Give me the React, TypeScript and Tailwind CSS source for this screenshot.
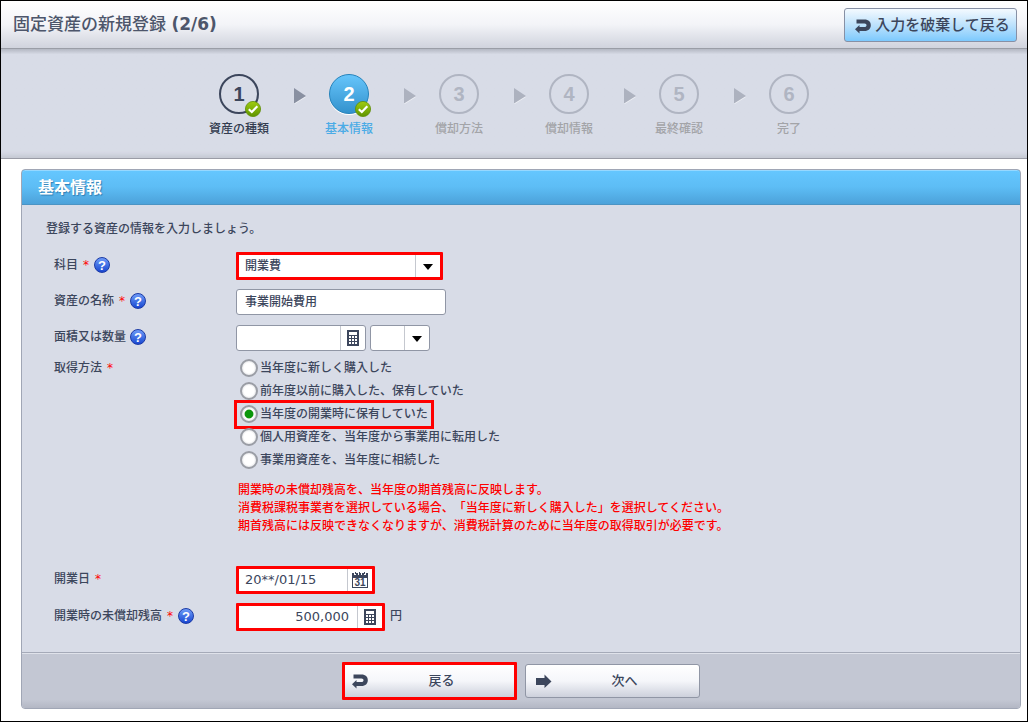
import React, { useState } from "react";

type StepState = "done" | "current" | "pending";

const steps: Array<{ label: string; state: StepState }> = [
  { label: "資産の種類", state: "done" },
  { label: "基本情報", state: "current" },
  { label: "償却方法", state: "pending" },
  { label: "償却情報", state: "pending" },
  { label: "最終確認", state: "pending" },
  { label: "完了", state: "pending" },
];

const methods = [
  "当年度に新しく購入した",
  "前年度以前に購入した、保有していた",
  "当年度の開業時に保有していた",
  "個人用資産を、当年度から事業用に転用した",
  "事業用資産を、当年度に相続した",
];

const circleStyles: Record<StepState, string> = {
  done: "border-2 border-[#3c465c] text-[#3c465c]",
  current: "border border-[#2482bb] bg-linear-to-b from-[#66c5fb] to-[#3292cd] text-white shadow-[0_1px_0_#ffffff]",
  pending: "border-2 border-[#b0b5c2] text-[#b0b5c2]",
};

const labelStyles: Record<StepState, string> = {
  done: "text-[#333c50]",
  current: "text-[#4aabe6]",
  pending: "text-[#a3a4a8]",
};

const BackIcon = () => (
  <svg width="16" height="15" viewBox="0 0 16 15" fill="currentColor" aria-hidden="true">
    <path d="M1.500 .5H9.500C13.500 .5 15.800 2.800 15.800 6.200S13.500 12 9.500 12H4.500V14.500L0 10.200L4.500 6V8H9.500C10.800 8 11.500 7.300 11.500 6.200S10.800 4.400 9.500 4.400H1.500Z" />
  </svg>
);

const NextIcon = () => (
  <svg width="16" height="15" viewBox="0 0 16 15" fill="currentColor" aria-hidden="true">
    <path d="M0 4H8.500V.5L15.500 7.500L8.500 14V11H0Z" />
  </svg>
);

const CheckBadge = () => (
  <svg className="absolute top-[27px] left-[26px]" width="16" height="16" viewBox="0 0 16 16" aria-hidden="true">
    <defs>
      <linearGradient id="badge" x1="0" y1="0" x2="0" y2="1">
        <stop offset="0" stopColor="#a0cc10" />
        <stop offset="1" stopColor="#5f9400" />
      </linearGradient>
    </defs>
    <circle cx="8" cy="8" r="7.600" fill="url(#badge)" stroke="#5f8f08" strokeWidth=".8" />
    <path d="M3.800 8.300L6.800 11L12.300 5.300" fill="none" stroke="#fff" strokeWidth="2.200" />
  </svg>
);

const CalculatorIcon = () => (
  <svg width="12" height="16" viewBox="0 0 12 16" aria-hidden="true" shapeRendering="crispEdges">
    <path fill="#3c465c" d="M0 0H12V16H0Z" />
    <path
      fill="#fff"
      d="M2 2H10V5H2ZM2 6H4V8H2ZM5 6H7V8H5ZM8 6H10V8H8ZM2 9H4V11H2ZM5 9H7V11H5ZM8 9H10V11H8ZM2 12H4V14H2ZM5 12H7V14H5ZM8 12H10V14H8Z"
    />
  </svg>
);

const CalendarIcon = () => (
  <svg width="16" height="16" viewBox="0 0 16 16" aria-hidden="true">
    <path
      shapeRendering="crispEdges"
      fill="#3c465c"
      d="M0 1H2V3H4V1H6V3H7V1H9V3H10V1H12V3H14V1H16V16H0ZM1 6V15H15V6Z"
      fillRule="evenodd"
    />
    <path shapeRendering="crispEdges" fill="#3c465c" d="M3 0H4V2H3ZM7 0H8V2H7ZM12 0H13V2H12Z" />
    <text x="8" y="14" textAnchor="middle" fontSize="10" fontWeight="700" fontFamily="Liberation Sans, sans-serif" fill="#3c465c">
      31
    </text>
  </svg>
);

const HelpButton = () => (
  <button
    type="button"
    aria-label="ヘルプ"
    className="ml-1 flex size-4 shrink-0 items-center justify-center rounded-full border border-[#1b3aa6] bg-linear-to-b from-[#6f9bf8] to-[#1a45d0] font-['Liberation_Sans',sans-serif] text-[13px] leading-none font-bold text-white"
  >
    ?
  </button>
);

const DropArrow = () => (
  <span className="pointer-events-none absolute inset-y-0 right-0 flex w-[25px] items-center justify-center border-l border-[#c5c8cf] pt-0.5">
    <svg width="10" height="6" viewBox="0 0 10 6" aria-hidden="true">
      <path d="M0 0H10L5 6Z" fill="#000" />
    </svg>
  </span>
);

type FieldProps = {
  label: string;
  htmlFor?: string;
  required?: boolean;
  help?: boolean;
  children: React.ReactNode;
};

const Field = ({ label, htmlFor, required, help, children }: FieldProps) => (
  <div className="flex h-9 items-center">
    <div className="flex w-[182px] shrink-0 items-center pb-0.5">
      <label htmlFor={htmlFor}>{label}</label>
      {required && <Required />}
      {help && <HelpButton />}
    </div>
    {children}
  </div>
);

const Required = () => <span className="w-3 pl-[5px] text-[#ff0000]">*</span>;

const boxStyle = "flex h-[26px] overflow-hidden rounded-[3px] border border-[#9096a5] bg-white";
const markedBoxStyle = "flex h-7 overflow-hidden rounded-[1px] border-3 border-[#ff0000] bg-white";
const iconButtonStyle = "flex w-[25px] shrink-0 items-center justify-center border-l border-[#c5c8cf]";

const App = () => {
  const [method, setMethod] = useState(2);

  return (
    <div className="border border-black bg-white font-['DejaVu_Sans','Noto_Sans_CJK_JP',sans-serif] text-[12px] leading-5 font-medium text-[#3c465c] [text-spacing-trim:space-all]">
      {/* 見出し */}
      <header className="flex h-12 items-center justify-between border-b border-[#9a9da6] bg-linear-to-b from-white via-[#f3f4f8] to-[#d0d3dd] pr-2.5 pl-3">
        <h1 className="pb-0.5 text-[17px] font-medium text-[#4d566b]">
          固定資産の新規登録 <span className="font-bold">(2/6)</span>
        </h1>
        <button
          type="button"
          className="flex h-[34px] w-[173px] items-center justify-center gap-1 rounded-[3px] border border-[#8790a5] bg-linear-to-b from-[#f4faff] via-[#bde2fc] to-[#7cc9fd] pl-1 text-[15px]"
        >
          <span className="pt-1">
            <BackIcon />
          </span>
          入力を破棄して戻る
        </button>
      </header>

      {/* 手順 */}
      <nav className="h-[110px] border-b border-[#9a9ca6] bg-[#d8dce7] bg-linear-to-b from-[#b4b8c3] from-0% via-[#d8dce7] via-5% to-[#d8dce7] pt-[25px] shadow-[inset_0_-6px_5px_-3px_#c4c8d2]">
        <ol className="flex justify-center">
          {steps.map((step, i) => (
            <React.Fragment key={step.label}>
              {i > 0 && (
                <li className="flex w-[30px] justify-end pt-3.5 pr-[3px]" aria-hidden="true">
                  <svg width="12" height="16" viewBox="0 0 12 16">
                    <path d="M0 1L12 9L0 16.500Z" fill="#eef0f5" />
                    <path d="M0 0L12 8L0 15.500Z" fill={i === 1 ? "#8990a1" : "#adb2bf"} />
                  </svg>
                </li>
              )}
              <li className="flex w-20 flex-col items-center">
                <div
                  className={`flex size-10 items-center justify-center rounded-full font-['Liberation_Sans',sans-serif] text-[20px] font-bold ${circleStyles[step.state]}`}
                >
                  {i + 1}
                </div>
                <div className="relative -mt-10 size-10">{step.state !== "pending" && <CheckBadge />}</div>
                <span className={`mt-[5px] ${labelStyles[step.state]}`}>{step.label}</span>
              </li>
            </React.Fragment>
          ))}
        </ol>
      </nav>

      <main className="pt-2.5 pr-1.5 pb-3 pl-5">
        <form className="overflow-hidden rounded-[4px] border border-[#a0a6b5] bg-[#d8dce7]" onSubmit={(e) => e.preventDefault()}>
          <h2 className="-mx-px -mt-px flex h-9 items-center rounded-t-[4px] border border-[#4b94c4] bg-linear-to-b from-[#65c7ff] via-[#5dbdf5] to-[#4ca2da] px-4 pt-0.5 text-[16px] font-bold text-white shadow-[inset_0_1px_0_#96d8ff] text-shadow-[1px_1px_1px_#2f7fb5]">
            基本情報
          </h2>

          <div className="px-6 pt-3.5 pb-[17px]">
            <p>登録する資産の情報を入力しましょう。</p>

            <div className="mt-[9px] pl-2">
              <Field label="科目" htmlFor="account" required help>
                <div className={`relative w-[207px] ${markedBoxStyle}`}>
                  <select id="account" defaultValue="開業費" className="w-full appearance-none pl-1.5">
                    <option>開業費</option>
                  </select>
                  <DropArrow />
                </div>
              </Field>

              <Field label="資産の名称" htmlFor="asset-name" required help>
                <div className={`w-[210px] ${boxStyle}`}>
                  <input id="asset-name" type="text" defaultValue="事業開始費用" className="w-full pl-2" />
                </div>
              </Field>

              <Field label="面積又は数量" htmlFor="quantity" help>
                <div className="flex gap-1">
                  <div className={`w-[130px] ${boxStyle}`}>
                    <input id="quantity" type="text" className="min-w-0 flex-1 px-2 text-right" />
                    <button type="button" aria-label="電卓" className={iconButtonStyle}>
                      <CalculatorIcon />
                    </button>
                  </div>
                  <div className={`relative w-[60px] ${boxStyle}`}>
                    <select aria-label="単位" className="w-full appearance-none">
                      <option></option>
                    </select>
                    <DropArrow />
                  </div>
                </div>
              </Field>

              <div className="flex pt-px" role="radiogroup" aria-labelledby="method-label">
                <div className="flex h-[23px] w-[182px] shrink-0 items-center pb-0.5">
                  <span id="method-label">取得方法</span>
                  <Required />
                </div>
                <div className="flex flex-col items-start pl-px">
                  {methods.map((name, i) => (
                    <label
                      key={name}
                      className={`flex h-[23px] items-center gap-0.5 px-[3px] pb-0.5 ${i === 2 ? "outline-3 outline-[#ff0000]" : ""}`}
                    >
                      <input
                        type="radio"
                        name="method"
                        checked={method === i}
                        onChange={() => setMethod(i)}
                        className="size-[18px] appearance-none rounded-full border-2 border-[#9a9da5] bg-radial from-white from-50% to-[#c9cbd0] checked:from-[#0a960a] checked:from-40% checked:via-white checked:via-50%"
                      />
                      <span>{name}</span>
                    </label>
                  ))}
                </div>
              </div>

              <p className="mt-[9px] pl-[184px] leading-[18px] text-[#ff0000]">
                開業時の未償却残高を、当年度の期首残高に反映します。
                <br />
                消費税課税事業者を選択している場合、「当年度に新しく購入した」を選択してください。
                <br />
                期首残高には反映できなくなりますが、消費税計算のために当年度の取得取引が必要です。
              </p>

              <div className="mt-[27px] flex flex-col gap-px">
                <Field label="開業日" htmlFor="open-date" required>
                  <div className={`w-[139px] ${markedBoxStyle}`}>
                    <input id="open-date" type="text" defaultValue="20**/01/15" className="min-w-0 flex-1 pl-1.5 text-[13px]" />
                    <button type="button" aria-label="カレンダー" className={iconButtonStyle}>
                      <CalendarIcon />
                    </button>
                  </div>
                </Field>

                <Field label="開業時の未償却残高" htmlFor="balance" required help>
                  <div className={`w-[149px] ${markedBoxStyle}`}>
                    <input id="balance" type="text" defaultValue="500,000" className="min-w-0 flex-1 pr-2 text-right text-[13px]" />
                    <button type="button" aria-label="電卓" className={iconButtonStyle}>
                      <CalculatorIcon />
                    </button>
                  </div>
                  <span className="pb-0.5 pl-[5px]">円</span>
                </Field>
              </div>
            </div>
          </div>

          {/* ボタン */}
          <div className="flex h-14 items-center justify-center gap-2 border-t border-[#a5aab8] bg-linear-to-b from-[#c3c7d3] from-85% to-[#b3b7c4] shadow-[inset_0_1px_0_#dfe2ea]">
            <button
              type="button"
              className="relative flex h-[38px] w-[175px] items-center justify-center rounded-[1px] border-3 border-[#ff0000] bg-linear-to-b from-white via-[#f5f6fa] to-[#cdd1dc] pl-6 text-[13px]"
            >
              <span className="absolute left-[7px] pt-0.5">
                <BackIcon />
              </span>
              戻る
            </button>
            <button
              type="submit"
              className="relative flex h-[34px] w-[175px] items-center justify-center rounded-[3px] border border-[#9096a5] bg-linear-to-b from-white via-[#f5f6fa] to-[#cdd1dc] pl-6 text-[13px]"
            >
              <span className="absolute left-2.5 pt-0.5">
                <NextIcon />
              </span>
              次へ
            </button>
          </div>
        </form>
      </main>
    </div>
  );
};

export default App;
